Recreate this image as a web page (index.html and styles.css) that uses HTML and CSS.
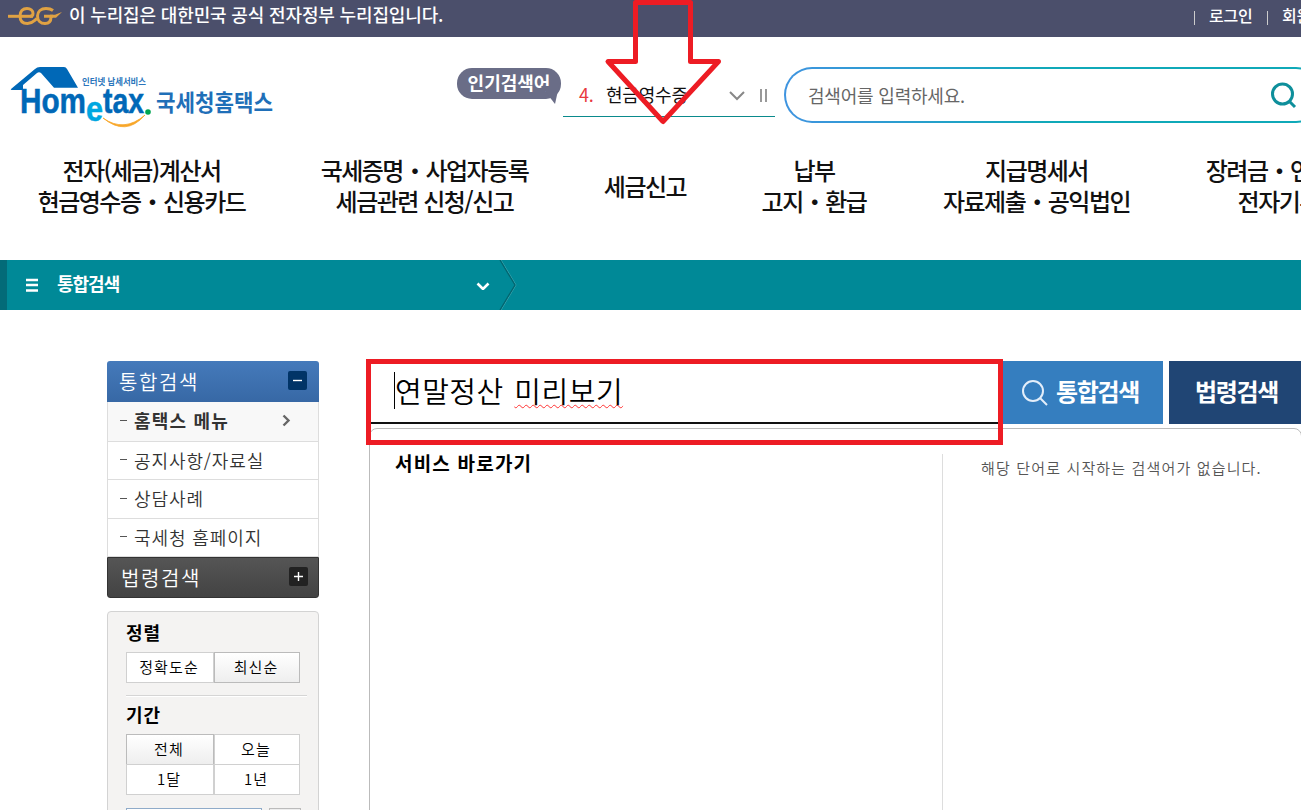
FILE: index.html
```html
<!DOCTYPE html>
<html lang="ko">
<head>
  <meta charset="UTF-8">
  <title>국세청 홈택스 - 통합검색</title>
  <link rel="stylesheet" href="styles.css">
</head>
<body>
  <div class="gov-bar">
    <svg class="gov-logo" width="56" height="22" viewBox="0 0 56 22" fill="none" stroke="#e0a243" stroke-width="3">
      <path d="M0 11.300h25" />
      <path d="M12 11c0-5 3-7.500 7-7.500 3.500 0 6 2 6 5 0 2-1 2.800-3 2.800M12 11c0 5 3 7.500 7.500 7.500 5 0 6.500-3 9.500-5" />
      <path d="M45 5.500c-2-1.500-4-2-7-2-5 0-8.500 3-8.500 7.500s3 7.500 7.500 7.500c4 0 6-2 6-6.500M36 11.300h9" />
      <path d="M42 9.700h5l7-2.700-6 5.700h-6z" fill="#e0a243" stroke="none" />
    </svg>
    <p>이 누리집은 대한민국 공식 전자정부 누리집입니다.</p>
    <ul class="gov-links">
      <li>로그인</li>
      <li>회원가입</li>
    </ul>
  </div>

  <header>
    <svg class="logo" width="266" height="64" viewBox="0 0 266 64">
      <path d="M1 24 25 4q2-2 5-2H54q2 0 3 2L68 22.700H44L31 8q-2-1.500-4 0L13 20v5H2q-2 0-1-1z" fill="#0068b7" />
      <text class="logo-sub" x="72" y="20" textLength="64" lengthAdjust="spacingAndGlyphs">인터넷 납세서비스</text>
      <text class="logo-en" x="10" y="48" textLength="66" lengthAdjust="spacingAndGlyphs">Hom</text>
      <text class="logo-e" x="76" y="56" textLength="17" lengthAdjust="spacingAndGlyphs">e</text>
      <text class="logo-en" x="93" y="48" textLength="41" lengthAdjust="spacingAndGlyphs">tax</text>
      <circle cx="138" cy="47" r="2.800" fill="#00a651" />
      <path d="M93 53q21 15 42-3-19 22-42 3z" fill="#f8a628" stroke="#f8a628" stroke-width=".8" />
      <text class="logo-ko" x="146" y="46" textLength="117" lengthAdjust="spacingAndGlyphs">국세청홈택스</text>
    </svg>
    <div class="popular">
      <span class="bubble">인기검색어</span>
      <div class="keyword">
        <em>4.</em>
        <span>현금영수증</span>
        <svg width="40" height="16" viewBox="0 0 40 16" fill="none" stroke="#888" stroke-width="2">
          <path d="M1 6l7 7 7-7" /><path d="M32 3v13M37 3v13" stroke="#999" />
        </svg>
      </div>
    </div>
    <div class="top-search">
      <span>검색어를 입력하세요.</span>
      <svg width="28" height="28" viewBox="0 0 28 28" fill="none" stroke="#0e8f9b" stroke-width="3">
        <circle cx="12.500" cy="13" r="10" /><path d="M19 20l6 6" />
      </svg>
    </div>
  </header>

  <nav>
    <a>전자(세금)계산서<br>현금영수증・신용카드</a>
    <a>국세증명・사업자등록<br>세금관련 신청/신고</a>
    <a>세금신고</a>
    <a>납부<br>고지・환급</a>
    <a>지급명세서<br>자료제출・공익법인</a>
    <a>장려금・연말정산<br>전자기부금</a>
  </nav>

  <div class="location">
    <svg width="14" height="14" viewBox="0 0 14 14" stroke="#fff" stroke-width="2.300"><path d="M1 2h12M1 7h12M1 12.500h12" /></svg>
    <strong>통합검색</strong>
    <svg class="loc-arrow" width="14" height="10" viewBox="0 0 14 10" fill="none" stroke="#fff" stroke-width="2.600"><path d="M1.500 3.500 7 9l5.500-5.500" /></svg>
    <svg width="20" height="50" viewBox="0 0 20 50" fill="none"><path d="M4 0l15 25L4 50" stroke="#3aa5b0" /><path d="M3 0l15 25L3 50" stroke="#03656f" stroke-width="1.300" /></svg>
  </div>

  <div class="container">
    <aside>
      <h2 class="menu-title">통합검색
        <svg width="19" height="19" viewBox="0 0 19 19"><rect width="19" height="19" rx="2" fill="#013467" /><path d="M5 9.500h9" stroke="#fff" stroke-width="1.400" /></svg>
      </h2>
      <ul class="menu">
        <li class="on">홈택스 메뉴
          <svg width="9" height="13" viewBox="0 0 9 13" fill="none" stroke="#666" stroke-width="2.400"><path d="M1.500 1.500l5 5-5 5" /></svg>
        </li>
        <li>공지사항/자료실</li>
        <li>상담사례</li>
        <li>국세청 홈페이지</li>
      </ul>
      <h2 class="menu-title dark">법령검색
        <svg width="19" height="19" viewBox="0 0 19 19"><rect width="19" height="19" rx="2" fill="#222" /><path d="M5 9.500h9M9.500 5v9" stroke="#fff" stroke-width="1.400" /></svg>
      </h2>

      <div class="filter">
        <h3>정렬</h3>
        <div class="btns">
          <button>정확도순</button>
          <button class="on">최신순</button>
        </div>
        <hr>
        <h3>기간</h3>
        <div class="btns">
          <button class="on">전체</button>
          <button>오늘</button>
          <button>1달</button>
          <button>1년</button>
        </div>
        <div class="date"><i class="date-input"></i><i class="date-btn"></i></div>
      </div>
    </aside>

    <main>
      <div class="search">
        <div class="search-input">
          <span class="caret"></span>
          <span>연말정산 <u>미리보기</u></span>
        </div>
        <div class="btn-total">
          <svg width="26" height="26" viewBox="0 0 26 26" fill="none" stroke="#e3eefa" stroke-width="2"><circle cx="11" cy="11" r="10" /><path d="M18 18l7 7" /></svg>
          <span>통합검색</span>
        </div>
        <div class="btn-law"><span>법령검색</span></div>
        <div class="red-box"></div>
      </div>
      <div class="suggest">
        <h3>서비스 바로가기</h3>
        <p>해당 단어로 시작하는 검색어가 없습니다.</p>
      </div>
    </main>
  </div>

  <svg class="red-arrow" width="120" height="126" viewBox="0 0 120 126" fill="none" stroke="#ed1c24" stroke-width="5" stroke-linejoin="round">
    <path d="M33.500 2.500h55v59h28l-55.500 60-55-60h27.500z" />
  </svg>
</body>
</html>
```
FILE: styles.css
```css
* {
  box-sizing: border-box;
}
body {
  margin: 0;
  width: 1301px;
  height: 810px;
  overflow: hidden;
  position: relative;
  background: #fff;
  color: #111;
  font-family: "Noto Sans CJK KR", sans-serif;
}
h2, h3, p, ul {
  margin: 0;
  padding: 0;
  list-style: none;
}

/* top bar */
.gov-bar {
  display: flex;
  height: 37px;
  padding-left: 8px;
  background: #4b4f6b;
  color: #fff;
  font-size: 18px;
  line-height: 29px;
  font-weight: 500;
  letter-spacing: -.15px;
  white-space: nowrap;
}
.gov-logo {
  margin-top: 5px;
  margin-right: 5px;
}
.gov-links {
  display: flex;
  width: 107px;
  margin-left: auto;
  overflow: hidden;
  font-size: 16px;
  line-height: 30px;
  letter-spacing: -.2px;
}
.gov-links li {
  flex: none;
  width: 73px;
  padding-left: 15px;
  background: linear-gradient(#ccc, #ccc) 0 11px / 1px 14px no-repeat;
}

/* header */
header {
  display: flex;
  height: 107px;
  padding-left: 10px;
  overflow: hidden;
  white-space: nowrap;
}
.logo {
  flex: none;
  margin-top: 28px;
}
.logo-en, .logo-e {
  font-family: "Liberation Sans", sans-serif;
  font-weight: bold;
  font-size: 35px;
  fill: #0068b7;
  stroke: #0068b7;
  stroke-width: .5px;
}
.logo-e {
  fill: #00a7e1;
  stroke: #00a7e1;
}
.logo-sub {
  font-size: 9px;
  font-weight: bold;
  fill: #2a75bb;
}
.logo-ko {
  font-size: 23px;
  font-weight: bold;
  fill: #1f6fb8;
}
.popular {
  display: flex;
  flex: none;
  width: 318px;
  margin: 31px 9px 0 181px;
}
.bubble {
  position: relative;
  width: 104px;
  height: 31px;
  border-radius: 15px;
  background: #6a6d87;
  color: #fff;
  font-size: 18px;
  font-weight: bold;
  line-height: 28px;
  text-align: center;
}
.bubble::after {
  content: "";
  position: absolute;
  right: 2px;
  bottom: -5px;
  border-top: 18px solid #6a6d87;
  border-left: 14px solid transparent;
  border-right: 4px solid transparent;
}
.keyword {
  display: flex;
  align-items: center;
  width: 212px;
  height: 49px;
  margin-left: 2px;
  padding: 3px 6px 0 16px;
  border-bottom: 1px solid #0a8a8c;
  font-size: 18px;
  letter-spacing: -.2px;
}
.keyword em {
  width: 27px;
  color: #e8393f;
  font-style: normal;
}
.keyword svg {
  margin-left: auto;
}
.top-search {
  display: flex;
  flex: none;
  align-items: center;
  justify-content: space-between;
  width: 540px;
  height: 56px;
  margin-top: 30px;
  padding: 0 24px 0 22px;
  border: 2px solid transparent;
  border-radius: 28px;
  background: linear-gradient(#fff, #fff) padding-box, linear-gradient(90deg, #3f94e0, #0fa9b8 50%) border-box;
  color: #666;
  font-size: 18px;
  letter-spacing: -.2px;
}

/* main menu */
nav {
  display: grid;
  grid-template-columns: 283px 283px 158px 180px 265px 132px;
  align-items: center;
  height: 116px;
  padding-bottom: 34px;
  font-size: 24px;
  font-weight: 500;
  line-height: 31px;
  letter-spacing: -1.5px;
  text-align: center;
  white-space: nowrap;
}
nav a:last-child {
  width: 240px;
}

/* location bar */
.location {
  display: flex;
  align-items: center;
  height: 50px;
  padding-left: 18px;
  border-left: 7px solid #036b78;
  background: #008997;
  color: #fff;
}
.location strong {
  width: 419px;
  margin-left: 18px;
  padding-bottom: 4px;
  font-size: 18px;
  letter-spacing: -1px;
}
.loc-arrow {
  margin-right: 7px;
}

/* content */
.container {
  display: flex;
  height: 500px;
  padding: 51px 0 0 107px;
  overflow: hidden;
}
aside {
  flex: none;
  width: 212px;
}
.menu-title {
  display: flex;
  align-items: center;
  justify-content: space-between;
  height: 41px;
  padding: 0 12px 0 12px;
  border-radius: 3px 3px 0 0;
  background: linear-gradient(#457abb, #3768a5);
  color: #fff;
  font-size: 20px;
  font-weight: 350;
  letter-spacing: 1.6px;
}
.menu-title svg {
  margin-bottom: 2px;
}
.menu-title.dark {
  padding: 0 10px 0 13px;
  border: 1px solid #333;
  border-radius: 0 0 3px 3px;
  background: linear-gradient(#555, #434343);
}
.menu li {
  display: flex;
  align-items: center;
  height: 38.5px;
  padding: 0 27px 1px 12px;
  border: 1px solid #ddd;
  border-top: 0;
  color: #333;
  font-size: 18px;
  font-weight: 350;
  letter-spacing: .9px;
}
.menu li::before {
  content: "";
  width: 7px;
  height: 1px;
  margin-right: 7px;
  background: #555;
}
.menu .on {
  height: 39.5px;
  padding-bottom: 2px;
  background: #f8f8f8;
  font-weight: bold;
  letter-spacing: 1.2px;
}
.menu svg {
  margin-left: auto;
}
.filter {
  height: 240px;
  margin-top: 13px;
  padding: 6px 11px 0 18px;
  border: 1px solid #d3d3d3;
  border-radius: 4px;
  background: #f4f3f2;
}
.filter h3 {
  height: 34px;
  color: #000;
  font-size: 18px;
  line-height: 28px;
  letter-spacing: 1px;
}
.btns {
  display: grid;
  grid-template-columns: 88px 86px;
}
.btns button {
  height: 31px;
  margin: 0 0 -1px;
  padding: 0 2px 2px 0;
  border: 1px solid #d0d0d0;
  background: #fff;
  color: #000;
  font-family: inherit;
  font-size: 15px;
  font-weight: 350;
  letter-spacing: 1.1px;
}
.btns .on {
  border: 1px solid #bbb;
  background: linear-gradient(#fff, #eee);
}
.filter hr {
  height: 2px;
  margin: 13px 0 3px;
  border: 0;
  border-top: 1px solid #d5d5d5;
  background: #fff;
}
.date {
  display: flex;
  gap: 7px;
  margin-top: 14px;
}
.date i {
  width: 136px;
  height: 28px;
  border: 1px solid #8fabc9;
  background: #fff;
}
.date .date-btn {
  width: 32px;
  border-color: #bbb;
  background: #eee;
}

main {
  flex: none;
  width: 933px;
  margin-left: 50px;
}
.search {
  position: relative;
  display: flex;
  height: 63px;
  font-size: 24px;
  font-weight: bold;
}
.search-input {
  display: flex;
  flex: none;
  align-items: center;
  width: 634px;
  padding: 0 0 3px 25px;
  border-bottom: 2px solid #111;
  color: #000;
  font-size: 29px;
  font-weight: 350;
  letter-spacing: .5px;
  word-spacing: 2px;
}
.search-input u {
  text-decoration: underline wavy #f33 1.4px;
}
.caret {
  width: 1px;
  height: 37px;
  background: #000;
}
.btn-total, .btn-law {
  display: flex;
  flex: none;
  align-items: center;
  width: 160px;
  padding-left: 19px;
  background: #357ebf;
  color: #fff;
  letter-spacing: -1.3px;
}
.btn-total span, .btn-law span {
  padding-bottom: 4px;
}
.btn-total svg {
  margin-right: 8px;
}
.btn-law {
  width: 132px;
  margin-left: 6px;
  padding-left: 26px;
  background: #204574;
}
.red-box {
  position: absolute;
  top: -2px;
  left: -3px;
  width: 637px;
  height: 86px;
  border: 5px solid #ed1c24;
}
.suggest {
  display: flex;
  height: 400px;
  margin-top: 4px;
  padding-top: 25px;
  border: 1px solid #bbb;
  border-radius: 8px;
}
.suggest h3 {
  width: 573px;
  padding-left: 25px;
  border-right: 1px solid #ddd;
  color: #000;
  font-size: 19px;
  line-height: 18px;
  letter-spacing: 1.2px;
}
.suggest p {
  padding-left: 38px;
  color: #555;
  font-size: 15px;
  font-weight: 350;
  line-height: 28px;
  letter-spacing: 1.15px;
}

/* arrow over the header */
.red-arrow {
  position: absolute;
  top: 0;
  left: 602px;
}
```
